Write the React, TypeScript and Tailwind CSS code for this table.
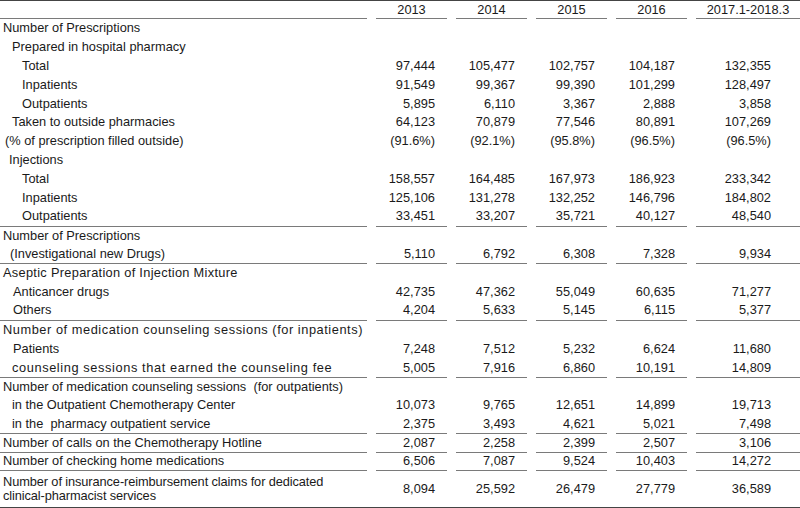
import React from "react";

type Row = { label: string; pad: string; extra?: string; values?: string[] };

const gridCols = "grid grid-cols-[367px_71px_71px_71px_71px_104px] gap-x-[9px]";

const groups: { rowH: string; rows: Row[] }[] = [
  {
    rowH: "h-[18.8px]",
    rows: [
      { label: "Number of Prescriptions", pad: "pl-[3px]" },
      { label: "Prepared in hospital pharmacy", pad: "pl-[12px]" },
      { label: "Total", pad: "pl-[22px]", values: ["97,444", "105,477", "102,757", "104,187", "132,355"] },
      { label: "Inpatients", pad: "pl-[22px]", values: ["91,549", "99,367", "99,390", "101,299", "128,497"] },
      { label: "Outpatients", pad: "pl-[22px]", values: ["5,895", "6,110", "3,367", "2,888", "3,858"] },
      { label: "Taken to outside pharmacies", pad: "pl-[12px]", values: ["64,123", "70,879", "77,546", "80,891", "107,269"] },
      { label: "(% of prescription filled outside)", pad: "pl-[5px]", values: ["(91.6%)", "(92.1%)", "(95.8%)", "(96.5%)", "(96.5%)"] },
      { label: "Injections", pad: "pl-[9px]" },
      { label: "Total", pad: "pl-[22px]", values: ["158,557", "164,485", "167,973", "186,923", "233,342"] },
      { label: "Inpatients", pad: "pl-[22px]", values: ["125,106", "131,278", "132,252", "146,796", "184,802"] },
      { label: "Outpatients", pad: "pl-[22px]", values: ["33,451", "33,207", "35,721", "40,127", "48,540"] },
    ],
  },
  {
    rowH: "h-[18.2px]",
    rows: [
      { label: "Number of Prescriptions", pad: "pl-[3px]" },
      { label: "(Investigational new Drugs)", pad: "pl-[10px]", values: ["5,110", "6,792", "6,308", "7,328", "9,934"] },
    ],
  },
  {
    rowH: "h-[18.5px]",
    rows: [
      { label: "Aseptic Preparation of Injection Mixture", pad: "pl-[3px]", extra: "tracking-[0.3px]" },
      { label: "Anticancer drugs", pad: "pl-[13px]", values: ["42,735", "47,362", "55,049", "60,635", "71,277"] },
      { label: "Others", pad: "pl-[13px]", values: ["4,204", "5,633", "5,145", "6,115", "5,377"] },
    ],
  },
  {
    rowH: "h-[18.8px]",
    rows: [
      { label: "Number of medication counseling sessions (for inpatients)", pad: "pl-[3px]", extra: "tracking-[0.55px]" },
      { label: "Patients", pad: "pl-[13px]", values: ["7,248", "7,512", "5,232", "6,624", "11,680"] },
      { label: "counseling sessions that earned the counseling fee", pad: "pl-[12px]", extra: "tracking-[0.6px]", values: ["5,005", "7,916", "6,860", "10,191", "14,809"] },
    ],
  },
  {
    rowH: "h-[18.2px]",
    rows: [
      { label: "Number of medication counseling sessions  (for outpatients)", pad: "pl-[3px]" },
      { label: "in the Outpatient Chemotherapy Center", pad: "pl-[12px]", values: ["10,073", "9,765", "12,651", "14,899", "19,713"] },
      { label: "in the  pharmacy outpatient service", pad: "pl-[12px]", values: ["2,375", "3,493", "4,621", "5,021", "7,498"] },
    ],
  },
  {
    rowH: "h-[18px]",
    rows: [{ label: "Number of calls on the Chemotherapy Hotline", pad: "pl-[3px]", values: ["2,087", "2,258", "2,399", "2,507", "3,106"] }],
  },
  {
    rowH: "h-[17.5px]",
    rows: [{ label: "Number of checking home medications", pad: "pl-[3px]", values: ["6,506", "7,087", "9,524", "10,403", "14,272"] }],
  },
];

const years = ["2013", "2014", "2015", "2016", "2017.1-2018.3"];

const Group = ({ rowH, rows }: { rowH: string; rows: Row[] }) => (
  <div className={gridCols}>
    <div className="border-b border-[#7a7a7a]">
      {rows.map((r, i) => (
        <div key={i} className={`${rowH} ${r.pad} ${r.extra ?? ""} flex items-center whitespace-pre`}>
          {r.label}
        </div>
      ))}
    </div>
    {[0, 1, 2, 3, 4].map((c) => (
      <div key={c} className="border-b border-[#7a7a7a]">
        {rows.map((r, i) => (
          <div
            key={i}
            className={`${rowH} flex items-center justify-end ${c === 4 ? "pr-[29px]" : "pr-[12px]"}`}
          >
            {r.values ? r.values[c] : ""}
          </div>
        ))}
      </div>
    ))}
  </div>
);

export default function App() {
  return (
    <div className="w-[800px] h-[508px] bg-white text-[#1a1a1a] text-[12.8px] leading-[14px] font-['Liberation_Sans',Arial,sans-serif] overflow-hidden">
      <div className="border-t border-[#444]">
        <div className={gridCols}>
          <div className="h-[18px] border-b border-[#7a7a7a]" />
          {years.map((y) => (
            <div key={y} className="h-[18px] flex items-center justify-center border-b border-[#7a7a7a]">
              {y}
            </div>
          ))}
        </div>
      </div>

      {groups.map((g, i) => (
        <Group key={i} rowH={g.rowH} rows={g.rows} />
      ))}

      <div className="border-b-2 border-[#444]">
        <div className={gridCols}>
          <div className="pl-[3px] py-[4px] leading-[14px] tracking-[-0.1px]">
            <div>Number of insurance-reimbursement claims for dedicated</div>
            <div>clinical-pharmacist services</div>
          </div>
          {["8,094", "25,592", "26,479", "27,779", "36,589"].map((v, c) => (
            <div key={c} className={`flex items-center justify-end ${c === 4 ? "pr-[29px]" : "pr-[12px]"}`}>
              {v}
            </div>
          ))}
        </div>
      </div>
    </div>
  );
}
